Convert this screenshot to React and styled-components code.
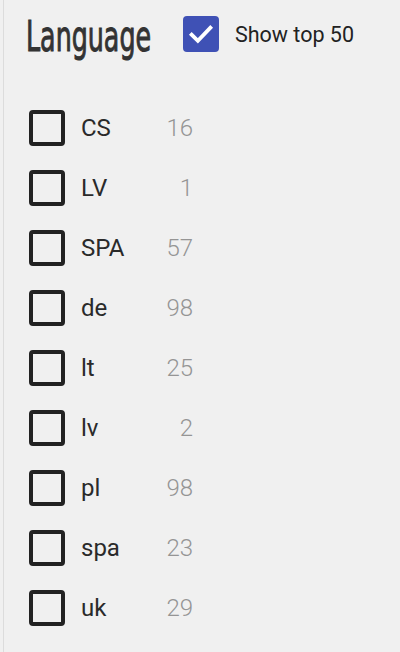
import React, { useState } from "react";
import styled, { createGlobalStyle } from "styled-components";

const GlobalStyle = createGlobalStyle`
    html, body {
        margin: 0;
        padding: 0;
        background: #f0f0f0;
    }
`;

const Panel = styled.aside`
    box-sizing: border-box;
    width: 400px;
    height: 652px;
    margin-left: 3px;
    border-left: 1px solid #dcdcdc;
    background: #f0f0f0;
    padding: 16px 0 0 22px;
    font-family: Roboto, "Liberation Sans", sans-serif;
`;

const Header = styled.header`
    display: flex;
    align-items: center;
    height: 36px;
`;

const Title = styled.h2`
    margin: 0;
    width: 157px;
    flex: none;
    font-family: "DejaVu Sans Condensed", "Liberation Sans Narrow", sans-serif;
    font-weight: 400;
    font-size: 43px;
    color: #333;
    line-height: 36px;
    white-space: nowrap;
    /* no Oswald offline, so squeeze a condensed face */
    transform: scaleX(0.655) translateY(2px);
    transform-origin: left center;
    -webkit-text-stroke: 1px #333;
`;

const Box = styled.span`
    box-sizing: border-box;
    flex: none;
    width: 36px;
    height: 36px;
    border-radius: 4px;
    display: flex;
    align-items: center;
    justify-content: center;
    border: ${(p) => (p.checked ? "none" : "4px solid #222")};
    background: ${(p) => (p.checked ? "#3f51b5" : "transparent")};
`;

const Toggle = styled.label`
    display: flex;
    align-items: center;
    gap: 16px;
    font-size: 21.5px;
    color: #222;
    cursor: pointer;
`;

const List = styled.ul`
    list-style: none;
    margin: 58px 0 0;
    padding: 0 0 0 3px;
    display: flex;
    flex-direction: column;
    gap: 24px;
`;

const Row = styled.li`
    display: flex;
    align-items: center;
    height: 36px;
    cursor: pointer;
`;

const Name = styled.span`
    margin-left: 16px;
    width: 60px;
    font-size: 24px;
    color: #2a2a2a;
`;

const Count = styled.span`
    width: 52px;
    text-align: right;
    font-size: 24px;
    font-weight: 300;
    color: #959595;
`;

const Check = () => (
    <svg width="30" height="30" viewBox="0 0 24 24">
        <path d="M4.5 12.5l5 5L19.5 7" fill="none" stroke="#fff" strokeWidth="3" strokeLinecap="square" />
    </svg>
);

const languages = [
    ["CS", 16],
    ["LV", 1],
    ["SPA", 57],
    ["de", 98],
    ["lt", 25],
    ["lv", 2],
    ["pl", 98],
    ["spa", 23],
    ["uk", 29],
];

const App = () => {
    const [top, setTop] = useState(true);
    const [picked, setPicked] = useState({});

    return (
        <>
            <GlobalStyle />
            <Panel>
                <Header>
                    <Title>Language</Title>
                    <Toggle onClick={() => setTop(!top)}>
                        <Box checked={top}>{top && <Check />}</Box>
                        Show top 50
                    </Toggle>
                </Header>
                <List>
                    {languages.map(([lang, n]) => (
                        <Row key={lang} onClick={() => setPicked({ ...picked, [lang]: !picked[lang] })}>
                            <Box checked={picked[lang]}>{picked[lang] && <Check />}</Box>
                            <Name>{lang}</Name>
                            <Count>{n}</Count>
                        </Row>
                    ))}
                </List>
            </Panel>
        </>
    );
};

export default App;
